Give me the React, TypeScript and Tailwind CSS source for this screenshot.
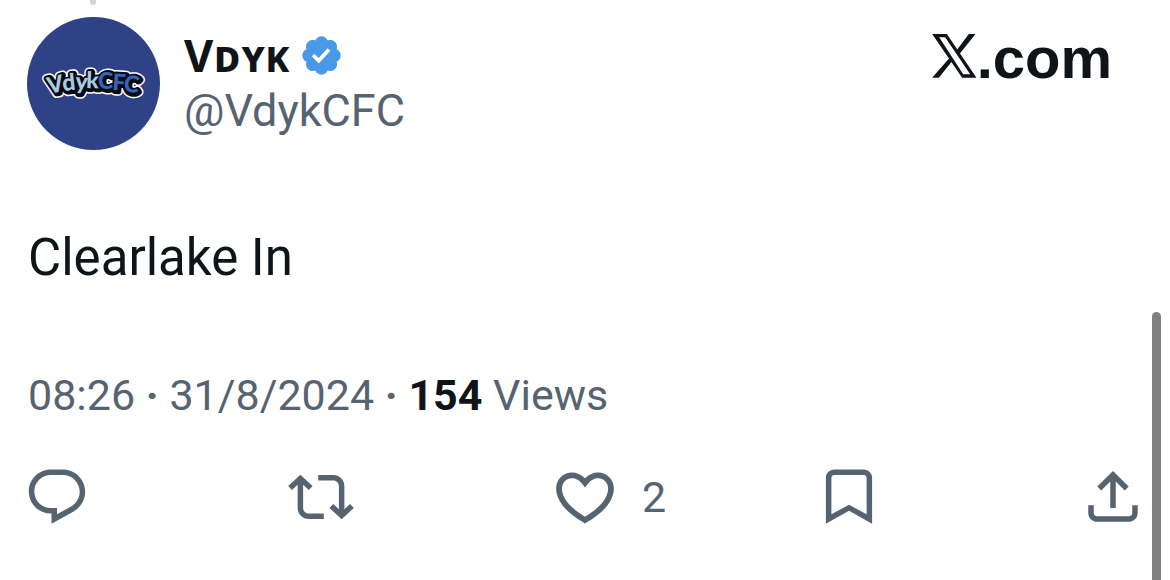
import { FC } from "react";

interface ActionProps {
  label: string;
  path: string;
  count?: number;
  viewBox?: string;
  className?: string;
}

const REPLY =
  "M1.751 10c0-4.42 3.584-8 8.005-8h4.366c4.49 0 8.129 3.64 8.129 8.13 0 2.96-1.607 5.68-4.196 7.11l-8.054 4.46v-3.69h-.067c-4.49.1-8.183-3.51-8.183-8.01zm8.005-6c-3.317 0-6.005 2.69-6.005 6 0 3.37 2.77 6.08 6.138 6.01l.351-.01h1.761v2.3l5.087-2.81c1.951-1.08 3.163-3.13 3.163-5.36 0-3.39-2.744-6.13-6.129-6.13H9.756z";
const REPOST =
  "M4.5 3.88l4.432 4.14-1.364 1.46L5.5 7.55V16c0 1.1.896 2 2 2H13v2H7.5c-2.209 0-4-1.79-4-4V7.55L1.432 9.48.068 8.02 4.5 3.88zM16.5 6H11V4h5.5c2.209 0 4 1.79 4 4v8.45l2.068-1.93 1.364 1.46-4.432 4.14-4.432-4.14 1.364-1.46 2.068 1.93V8c0-1.1-.896-2-2-2z";
const LIKE =
  "M16.697 5.5c-1.222-.06-2.679.51-3.89 2.16l-.805 1.09-.806-1.09C9.984 6.01 8.526 5.44 7.304 5.5c-1.243.07-2.349.78-2.91 1.91-.552 1.12-.633 2.78.479 4.82 1.074 1.97 3.257 4.27 7.129 6.61 3.87-2.34 6.052-4.64 7.126-6.61 1.111-2.04 1.03-3.7.477-4.82-.561-1.13-1.666-1.84-2.908-1.91zm4.187 7.69c-1.351 2.48-4.001 5.12-8.379 7.67l-.503.3-.504-.3c-4.379-2.55-7.029-5.19-8.382-7.67-1.36-2.5-1.41-4.86-.514-6.67.887-1.79 2.647-2.91 4.601-3.01 1.651-.09 3.368.56 4.798 2.01 1.429-1.45 3.146-2.1 4.796-2.01 1.954.1 3.714 1.22 4.601 3.01.896 1.81.846 4.17-.514 6.67z";
const BOOKMARK =
  "M3.6 5c0-1.66 1.34-3 3-3h10.8c1.66 0 3 1.34 3 3v16.7L12 17l-8.4 4.7V5zm3-1c-.55 0-1 .45-1 1v13.3l6.4-3.5 6.4 3.5V5c0-.55-.45-1-1-1H6.6z";
const SHARE =
  "M12 2.5l5.7 5.7-1.41 1.42L13 6.33V16h-2V6.33l-3.3 3.29-1.41-1.42L12 2.5zM21 15l-.02 2.8c0 1.8-1.4 3.2-3.2 3.2H6.2C4.4 21 3 19.6 3 17.8V15h2v2.8c0 .7.5 1.2 1.2 1.2h11.6c.7 0 1.2-.5 1.2-1.2V15h2z";
const VERIFIED =
  "M20.396 11c-.018-.646-.215-1.275-.57-1.816-.354-.54-.852-.972-1.438-1.246.223-.607.27-1.264.14-1.897-.131-.634-.437-1.218-.882-1.687-.47-.445-1.053-.75-1.687-.882-.633-.13-1.29-.083-1.897.14-.273-.587-.704-1.086-1.245-1.44S11.647 1.62 11 1.604c-.646.017-1.273.213-1.813.568s-.969.854-1.24 1.44c-.608-.223-1.267-.272-1.902-.14-.635.13-1.22.436-1.69.882-.445.47-.749 1.055-.878 1.688-.13.633-.08 1.29.144 1.896-.587.274-1.087.705-1.443 1.245-.356.54-.555 1.17-.574 1.817.02.647.218 1.276.574 1.817.356.54.856.972 1.443 1.245-.224.606-.274 1.263-.144 1.896.13.634.433 1.218.877 1.688.47.443 1.054.747 1.687.878.633.132 1.29.084 1.897-.136.274.586.705 1.084 1.246 1.439.54.354 1.17.551 1.816.569.647-.016 1.276-.213 1.817-.567s.972-.854 1.245-1.44c.604.239 1.266.296 1.903.164.636-.132 1.22-.447 1.68-.907.46-.46.776-1.044.908-1.681s.075-1.299-.165-1.903c.586-.274 1.084-.705 1.439-1.246.354-.54.551-1.17.569-1.816zM9.662 14.85l-3.429-3.428 1.293-1.302 2.072 2.072 4.4-4.794 1.347 1.246z";

const LETTERS = [
  { char: "V", x: 22, y: 77, angle: -12, fill: "#a9c9dd" },
  { char: "d", x: 36, y: 74, angle: -6, fill: "#a9c9dd" },
  { char: "y", x: 48, y: 72, angle: 4, fill: "#a9c9dd" },
  { char: "k", x: 59, y: 71, angle: 2, fill: "#a9c9dd" },
  { char: "C", x: 71, y: 72, angle: 0, fill: "#3a62b8" },
  { char: "F", x: 85, y: 73, angle: 4, fill: "#3a62b8" },
  { char: "C", x: 96, y: 74, angle: 8, fill: "#3a62b8" },
];

const Wordmark: FC<{ outline?: string; width?: number; shift?: number }> = ({ outline, width = 0, shift = 0 }) => (
  <g stroke={outline} strokeWidth={width} strokeLinejoin="round" aria-hidden={!!outline}>
    {LETTERS.map(({ char, x, y, angle, fill }) => (
      <text key={x} x={x + shift} y={y + shift} transform={`rotate(${angle} ${x} ${y})`} fill={outline ?? fill}>
        {char}
      </text>
    ))}
  </g>
);

const Avatar = () => (
  <svg viewBox="0 0 133 133" className="size-[133px] shrink-0 rounded-full bg-[#2f4187]">
    <g className="font-['Lato',sans-serif] text-[23px] font-black">
      <Wordmark outline="#ffffff" width={9} shift={1} />
      <Wordmark outline="#060b16" width={6} shift={1} />
      <Wordmark />
    </g>
  </svg>
);

const XLogo = () => (
  <svg viewBox="0 0 134 132" className="h-11 w-[45px]" fill="currentColor" role="img" aria-label="X">
    <path fillRule="evenodd" d="M0 0H44L133 131H90ZM21 10L93 121H114L39 10Z" />
    <path d="M110 0H130L82 60L74 48ZM0 131H20L62 79L55 68Z" />
  </svg>
);

const Action: FC<ActionProps> = ({ label, path, count, viewBox = "0 0 24 24", className = "flex-1" }) => (
  <div className={className}>
    <button type="button" aria-label={label} className="flex items-center gap-6">
      <svg viewBox={viewBox} className="size-[66px]" fill="currentColor">
        <path d={path} />
      </svg>
      {count !== undefined && <span className="text-[43px] leading-none">{count}</span>}
    </button>
  </div>
);

const Dot = () => <span className="font-bold">·</span>;

export default function App() {
  return (
    <div className="relative min-h-screen overflow-hidden bg-white font-['Roboto',sans-serif] text-[#566370]">
      {/* end of the thread line above the avatar */}
      <div className="ml-[90px] h-[5px] w-[6px] rounded-b-full bg-[#cfd5da]" />

      <article>
        <header className="flex items-start pt-3 pr-[58px] pl-[27px]">
          <Avatar />
          <div className="ml-6 pt-3">
            <div className="flex items-center gap-2">
              <h1 className="font-['Noto_Sans',sans-serif] text-[45px] leading-[52px] font-bold text-[#0f1419]">Vᴅʏᴋ</h1>
              <svg viewBox="0 0 22 22" className="size-[45px]" fill="#4a99e9" role="img" aria-label="Verified account">
                <path d={VERIFIED} />
              </svg>
            </div>
            <a href="#profile" className="block text-[45px] leading-[60px]">
              @VdykCFC
            </a>
          </div>
          <a href="#home" className="ml-auto flex items-center pt-1 text-[#0f1419]">
            <XLogo />
            <span className="pt-1 font-['Liberation_Sans',sans-serif] text-[58px] leading-[66px] font-bold">.com</span>
          </a>
        </header>

        <p className="mt-[76px] px-7 text-[51px] leading-[64px] text-[#0f1419]">Clearlake In</p>

        <p className="mt-[75px] px-7 text-[43px] leading-[60px]">
          <time>
            08:26 <Dot /> 31/8/2024
          </time>{" "}
          <Dot /> <strong className="font-bold text-[#0f1419]">154</strong> Views
        </p>

        <footer className="mt-[39px] flex px-6">
          <Action label="Reply" path={REPLY} />
          <Action label="Repost" path={REPOST} />
          <Action label="Like" path={LIKE} count={2} viewBox="0.57 0.57 22.86 22.86" />
          <Action label="Bookmark" path={BOOKMARK} />
          <Action label="Share" path={SHARE} className="shrink-0" />
        </footer>
      </article>

      {/* overlay scrollbar thumb */}
      <div className="absolute top-[312px] right-[9px] bottom-0 w-[9px] rounded-t-full bg-[#808080]" />
    </div>
  );
}
